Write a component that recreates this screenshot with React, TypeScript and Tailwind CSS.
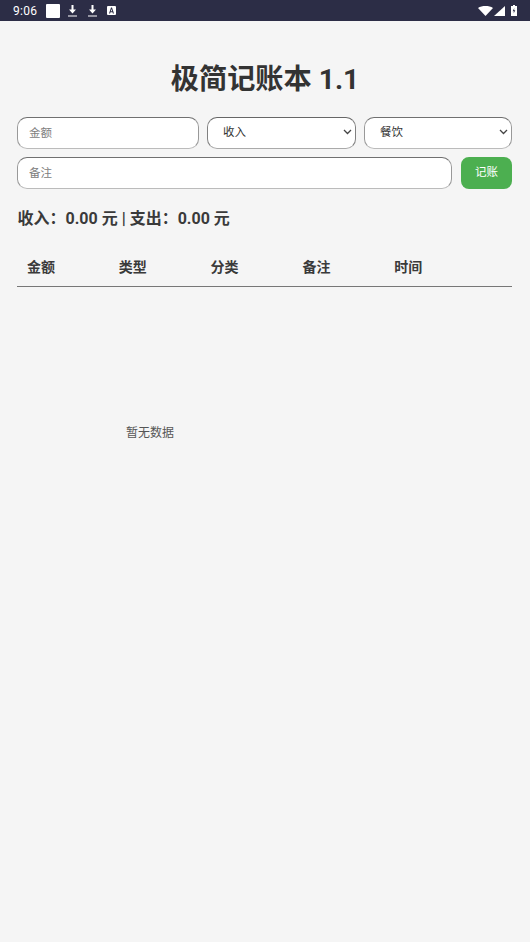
const FONT = "font-['Roboto','Noto_Sans_CJK_SC',sans-serif]";

function StatusBar() {
  return (
    <div className="h-[21px] bg-[#2c2d46] flex items-center justify-between pl-[13px] pr-[13px] text-white">
      <div className="flex items-center">
        <span className="text-[12px] leading-none tracking-[0.3px]">9:06</span>
        <span className="ml-[9px] w-[14px] h-[14px] bg-white rounded-[1px]" />
        <svg className="ml-[8px]" width="9" height="12" viewBox="0 0 9 12" fill="white">
          <path d="M3.500 0h2v4.500H8L4.500 8.500 1 4.500h2.500z" />
          <rect x="0" y="10.500" width="9" height="1" />
        </svg>
        <svg className="ml-[11px]" width="9" height="12" viewBox="0 0 9 12" fill="white">
          <path d="M3.500 0h2v4.500H8L4.500 8.500 1 4.500h2.500z" />
          <rect x="0" y="10.500" width="9" height="1" />
        </svg>
        <svg className="ml-[10px]" width="9" height="9" viewBox="0 0 9 9">
          <rect width="9" height="9" rx="1" fill="white" />
          <path d="M2 7.500 4 1.500h1l2 6H5.900l-.4-1.300h-2L3.100 7.500zM3.800 5.300h1.400L4.500 3z" fill="#2c2d46" />
        </svg>
      </div>
      <div className="flex items-center">
        <svg width="15" height="10" viewBox="0 0 15 10" fill="white">
          <path d="M0 2C4-.6 11-.6 15 2L7.500 10z" />
        </svg>
        <svg className="ml-[1px]" width="11" height="10" viewBox="0 0 11 10" fill="white">
          <path d="M11 0v10H0z" />
        </svg>
        <svg className="ml-[6px]" width="6" height="11" viewBox="0 0 6 11">
          <path d="M2 0h2v1h2v10H0V1h2z" fill="white" />
          <path d="M3.300 3 1.700 6.300h1.200L2.600 8.500 4.300 5.200H3.100z" fill="#2c2d46" />
        </svg>
      </div>
    </div>
  );
}

function Chevron() {
  return (
    <svg
      className="absolute right-[4.500px] top-[12px] pointer-events-none"
      width="9"
      height="6"
      viewBox="0 0 9 6"
      fill="none"
      stroke="#444"
      strokeWidth="1.300"
    >
      <path d="M1 1l3.500 3.500L8 1" />
    </svg>
  );
}

export default function App() {
  return (
    <div className={`${FONT} min-h-[942px] bg-[#f5f5f5] text-[#333]`}>
      <StatusBar />
      <main className="pl-[17px] pr-[18px]">
        <h1 className="mt-[41px] pl-[1px] text-center text-[28.200px] leading-[36px] font-bold">极简记账本 1.1</h1>

        <div className="mt-[19px] flex gap-[8px]">
          <input
            placeholder="金额"
            className="w-[182px] h-[32px] bg-white border border-[#999] border-t-[#707070] border-b-[#bbb] rounded-[10px] pl-[11px] text-[11.500px] placeholder:text-[#808080] outline-none"
          />
          <div className="relative w-[149px]">
            <select className="appearance-none w-full h-[32px] bg-white border border-[#808080] border-t-[#666] border-b-[#aaa] rounded-[10px] pl-[15px] text-[11.500px] text-[#333]">
              <option>收入</option>
              <option>支出</option>
            </select>
            <Chevron />
          </div>
          <div className="relative w-[148px]">
            <select className="appearance-none w-full h-[32px] bg-white border border-[#999] border-t-[#707070] border-b-[#bbb] rounded-[10px] pl-[15px] text-[11.500px] text-[#333]">
              <option>餐饮</option>
            </select>
            <Chevron />
          </div>
        </div>

        <div className="mt-[8px] flex gap-[9px]">
          <input
            placeholder="备注"
            className="w-[435px] h-[32px] bg-white border border-[#999] border-t-[#707070] border-b-[#bbb] rounded-[10px] pl-[11px] text-[11.500px] placeholder:text-[#808080] outline-none"
          />
          <button className="w-[51px] h-[32px] bg-[#4caf50] rounded-[8px] text-white text-[11.500px]">记账</button>
        </div>

        <p className="mt-[19px] pl-[0.500px] text-[16px] leading-[22px] font-bold text-[#3a3a3a]">收入：0.00 元 | 支出：0.00 元</p>

        <div className="mt-[18px] h-[39px] border-b border-[#777] grid grid-cols-[91.800px_91.800px_91.800px_91.800px_1fr] items-center pl-[10px] text-[14px] font-bold text-[#3a3a3a]">
          <span>金额</span>
          <span>类型</span>
          <span>分类</span>
          <span>备注</span>
          <span>时间</span>
        </div>

        <p className="mt-[138px] ml-[109px] text-[12px] leading-[16px] text-[#555]">暂无数据</p>
      </main>
    </div>
  );
}
